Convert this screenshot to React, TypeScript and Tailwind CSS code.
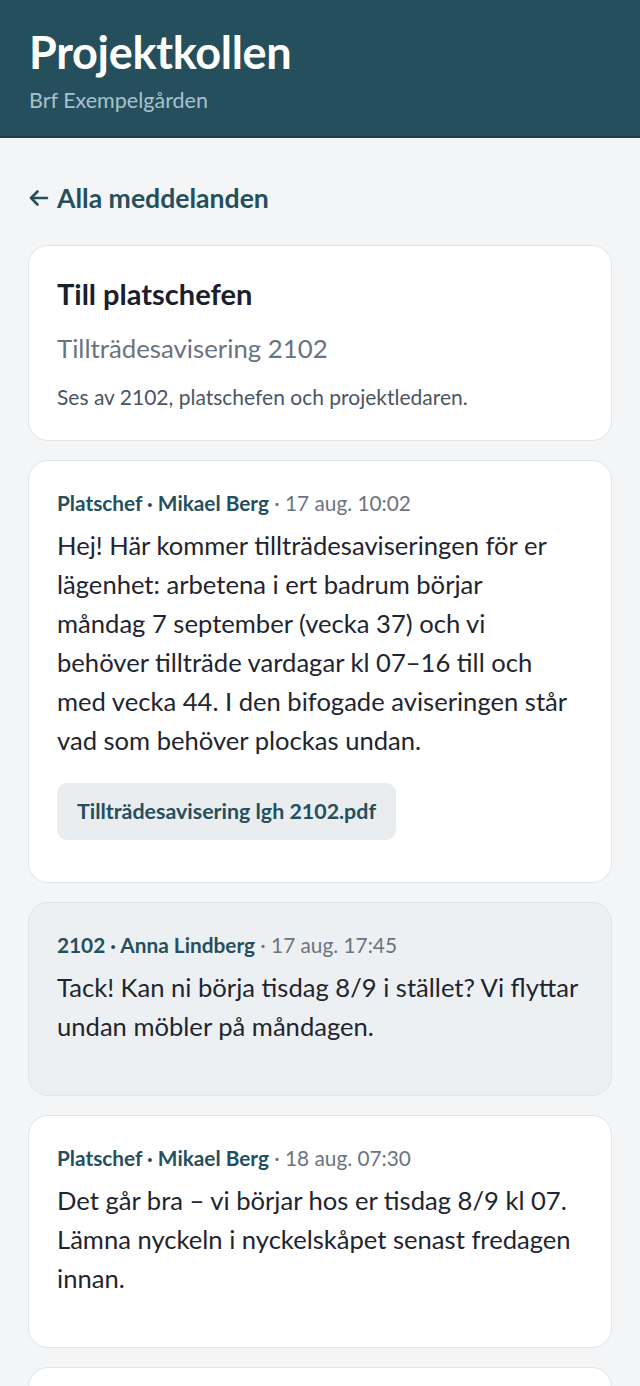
import React from 'react'

type Message = {
  id: string
  author: string
  time: string
  lines: string[]
  attachment?: string
  own?: boolean
}

const MESSAGES: Message[] = [
  {
    id: 'm1',
    author: 'Platschef · Mikael Berg',
    time: '17 aug. 10:02',
    lines: [
      'Hej! Här kommer tillträdesaviseringen för er',
      'lägenhet: arbetena i ert badrum börjar',
      'måndag 7 september (vecka 37) och vi',
      'behöver tillträde vardagar kl 07–16 till och',
      'med vecka 44. I den bifogade aviseringen står',
      'vad som behöver plockas undan.',
    ],
    attachment: 'Tillträdesavisering lgh 2102.pdf',
  },
  {
    id: 'm2',
    author: '2102 · Anna Lindberg',
    time: '17 aug. 17:45',
    lines: ['Tack! Kan ni börja tisdag 8/9 i stället? Vi flyttar', 'undan möbler på måndagen.'],
    own: true,
  },
  {
    id: 'm3',
    author: 'Platschef · Mikael Berg',
    time: '18 aug. 07:30',
    lines: [
      'Det går bra – vi börjar hos er tisdag 8/9 kl 07.',
      'Lämna nyckeln i nyckelskåpet senast fredagen',
      'innan.',
    ],
  },
]

function MessageCard({ msg }: { msg: Message }) {
  return (
    <div
      className={
        'rounded-[20px] border border-[#e1e5e8] px-7 pt-[27px] ' +
        (msg.attachment ? 'pb-[42px] ' : 'pb-[49px] ') +
        (msg.own ? 'bg-[#edf0f2]' : 'bg-white')
      }
    >
      <div className="text-[20.8px] leading-[30px]">
        <span className="font-bold text-[#264f5e]">{msg.author}</span>
        <span className="text-[#6b7480]"> · {msg.time}</span>
      </div>
      <p className="mt-[8px] text-[25.6px] leading-[39px] text-[#1f2530]">
        {msg.lines.map((l, i) => (
          <React.Fragment key={i}>
            {l}
            {i < msg.lines.length - 1 && <br />}
          </React.Fragment>
        ))}
      </p>
      {msg.attachment && (
        <div className="mt-[23px] inline-flex h-[57px] items-center rounded-[10px] bg-[#e9edef] px-[20px] text-[21.4px] font-bold text-[#264f5e]">
          {msg.attachment}
        </div>
      )}
    </div>
  )
}

export default function App() {
  return (
    <div
      className="min-h-[1386px] bg-[#f3f5f7]"
      style={{ fontFamily: '"Lato", "Noto Sans", sans-serif' }}
    >
      <header className="h-[138px] border-b-2 border-[#1d404c] bg-[#264f5e] px-[29px] pt-[26px]">
        <h1 className="text-[45px] font-bold leading-[52px] tracking-[-0.3px] text-white">
          Projektkollen
        </h1>
        <div className="mt-[9px] text-[21.5px] leading-[26px] text-[#a6c2cb]">Brf Exempelgården</div>
      </header>

      <main className="flex flex-col gap-[19px] px-[28px] pt-[43px]">
        <a className="mb-[11px] flex h-[34px] items-center gap-[8px] text-[26.6px] font-bold leading-[34px] text-[#264f5e]">
          <svg width="21" height="20" viewBox="0 0 21 20" fill="none" stroke="currentColor" strokeWidth="2.6" strokeLinecap="round" strokeLinejoin="round">
            <path d="M19 10H3M9.5 3.5L3 10l6.5 6.5" />
          </svg>
          Alla meddelanden
        </a>

        <div className="rounded-[20px] border border-[#e1e5e8] bg-white px-7 pt-[30px] pb-[29px]">
          <h2 className="text-[29px] font-bold leading-[36px] text-[#1a202b]">Till platschefen</h2>
          <div className="mt-[19px] text-[25.8px] leading-[34px] text-[#6b7280]">Tillträdesavisering 2102</div>
          <div className="mt-[18px] text-[21px] leading-[28px] text-[#4b5563]">
            Ses av 2102, platschefen och projektledaren.
          </div>
        </div>

        {MESSAGES.map((m) => (
          <MessageCard key={m.id} msg={m} />
        ))}

        <div className="h-[40px] rounded-t-[20px] border border-[#e1e5e8] bg-white" />
      </main>
    </div>
  )
}
